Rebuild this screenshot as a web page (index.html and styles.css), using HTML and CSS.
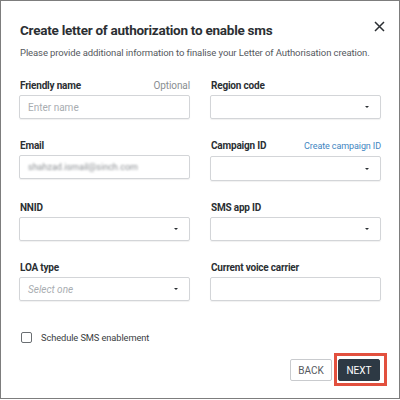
FILE: index.html
```html
<!DOCTYPE html>
<html>
<head>
<meta charset="utf-8">
<link rel="stylesheet" href="styles.css">
</head>
<body>
<div class="modal">
  <div class="header">
    <h1 class="title">Create letter of authorization to enable sms</h1>
    <span class="close">
      <svg width="11" height="11" viewBox="0 0 11 11"><path d="M1 1L10 10M10 1L1 10" stroke="#2b2f33" stroke-width="1.5" fill="none"/></svg>
    </span>
  </div>
  <p class="subtitle">Please provide additional information to finalise your Letter of Authorisation creation.</p>
  <div class="grid">
    <div class="field">
      <div class="label-row"><span class="label">Friendly name</span><span class="optional">Optional</span></div>
      <div class="box"><span class="placeholder">Enter name</span></div>
    </div>
    <div class="field">
      <div class="label-row"><span class="label">Region code</span></div>
      <div class="box select"><span class="caret"></span></div>
    </div>
    <div class="field">
      <div class="label-row"><span class="label">Email</span></div>
      <div class="box"><span class="blurred">shahzad.ismail@sinch.com</span></div>
    </div>
    <div class="field">
      <div class="label-row tall"><span class="label">Campaign ID</span><span class="link">Create campaign ID</span></div>
      <div class="box select tallbox"><span class="caret"></span></div>
    </div>
    <div class="field">
      <div class="label-row"><span class="label">NNID</span></div>
      <div class="box select"><span class="caret"></span></div>
    </div>
    <div class="field">
      <div class="label-row"><span class="label">SMS app ID</span></div>
      <div class="box select"><span class="caret"></span></div>
    </div>
    <div class="field">
      <div class="label-row"><span class="label">LOA type</span></div>
      <div class="box select"><span class="placeholder italic">Select one</span><span class="caret"></span></div>
    </div>
    <div class="field">
      <div class="label-row"><span class="label">Current voice carrier</span></div>
      <div class="box"></div>
    </div>
  </div>
  <div class="check-row">
    <span class="checkbox"></span>
    <span class="check-label">Schedule SMS enablement</span>
  </div>
  <div class="footer">
    <button class="btn back">BACK</button>
    <span class="next-wrap"><button class="btn next">NEXT</button><span class="highlight"></span></span>
  </div>
</div>
</body>
</html>
```

FILE: styles.css
```css
* { box-sizing: border-box; }
html, body { margin: 0; padding: 0; background: #fff; }
body { font-family: Roboto, "Liberation Sans", Arial, sans-serif; color: #2b2f33; }
.modal {
  width: 400px;
  height: 399px;
  border: 1px solid #7d7d7d;
  padding: 20px 19px 0 18px;
  display: flex;
  flex-direction: column;
}
.header {
  display: flex;
  justify-content: space-between;
  align-items: flex-start;
}
.title {
  margin: 0;
  font-size: 13.5px;
  line-height: 18px;
  font-weight: bold;
  color: #2b2f33;
  padding-left: 1px;
  letter-spacing: -0.25px;
}
.close { display: block; margin-top: 0; margin-right: -5px; line-height: 0; }
.subtitle {
  margin: 7px 0 0 1px;
  font-size: 9.5px;
  line-height: 14px;
  color: #55595e;
  white-space: nowrap;
  letter-spacing: -0.1px;
}
.grid {
  margin-top: 20px;
  display: grid;
  grid-template-columns: 171px 171px;
  column-gap: 20px;
  row-gap: 21px;
}
.field { display: flex; flex-direction: column; }
.label-row {
  display: flex;
  justify-content: space-between;
  align-items: baseline;
  height: 12px;
  line-height: 12px;
  margin-bottom: 3px;
  padding-left: 1px;
}
.label-row.tall { margin-bottom: 4px; }
.label { font-size: 10px; font-weight: bold; color: #2b2f33; letter-spacing: -0.2px; }
.optional { font-size: 10px; color: #8a8e92; letter-spacing: -0.1px; }
.link { font-size: 9px; color: #3f86bf; letter-spacing: -0.1px; }
.box {
  height: 24px;
  border: 1px solid #d3d5d8;
  border-radius: 2px;
  box-shadow: 0 1px 1px rgba(0,0,0,0.06);
  display: flex;
  align-items: center;
  padding: 0 8px;
  position: relative;
}
.tallbox { height: 25px; }
.placeholder { font-size: 10px; color: #a9adb1; }
.italic { font-style: italic; }
.blurred { font-size: 9px; color: #8a8e92; filter: blur(1.2px); }
.caret {
  position: absolute;
  right: 11px;
  top: 50%;
  margin-top: -1px;
  width: 0; height: 0;
  border-left: 2px solid transparent;
  border-right: 2px solid transparent;
  border-top: 2.5px solid #2b2f33;
}
.check-row {
  display: flex;
  align-items: center;
  height: 12px;
  margin-top: 30px;
  padding-left: 2px;
}
.checkbox {
  width: 11px; height: 11px;
  border: 1px solid #6a6e72;
  border-radius: 2px;
  margin-right: 9px;
}
.check-label { font-size: 9.3px; color: #3a3e42; letter-spacing: -0.1px; }
.footer {
  display: flex;
  justify-content: flex-end;
  align-items: center;
  margin-top: 16px;
}
.btn {
  font-family: Roboto, "Liberation Sans", Arial, sans-serif;
  font-size: 10px;
  height: 22px;
  border-radius: 2px;
  padding: 0;
  width: 42px;
  display: block;
}
.back { background: #fff; border: 1px solid #c9cbce; color: #55595e; margin-right: 6px; }
.next-wrap { position: relative; display: block; }
.next { background: #2d3944; border: 1px solid #2d3944; color: #fff; }
.highlight {
  position: absolute;
  top: -6px; bottom: -5px; left: -4px; right: -7px;
  border: 3px solid #e2503e;
}
```
